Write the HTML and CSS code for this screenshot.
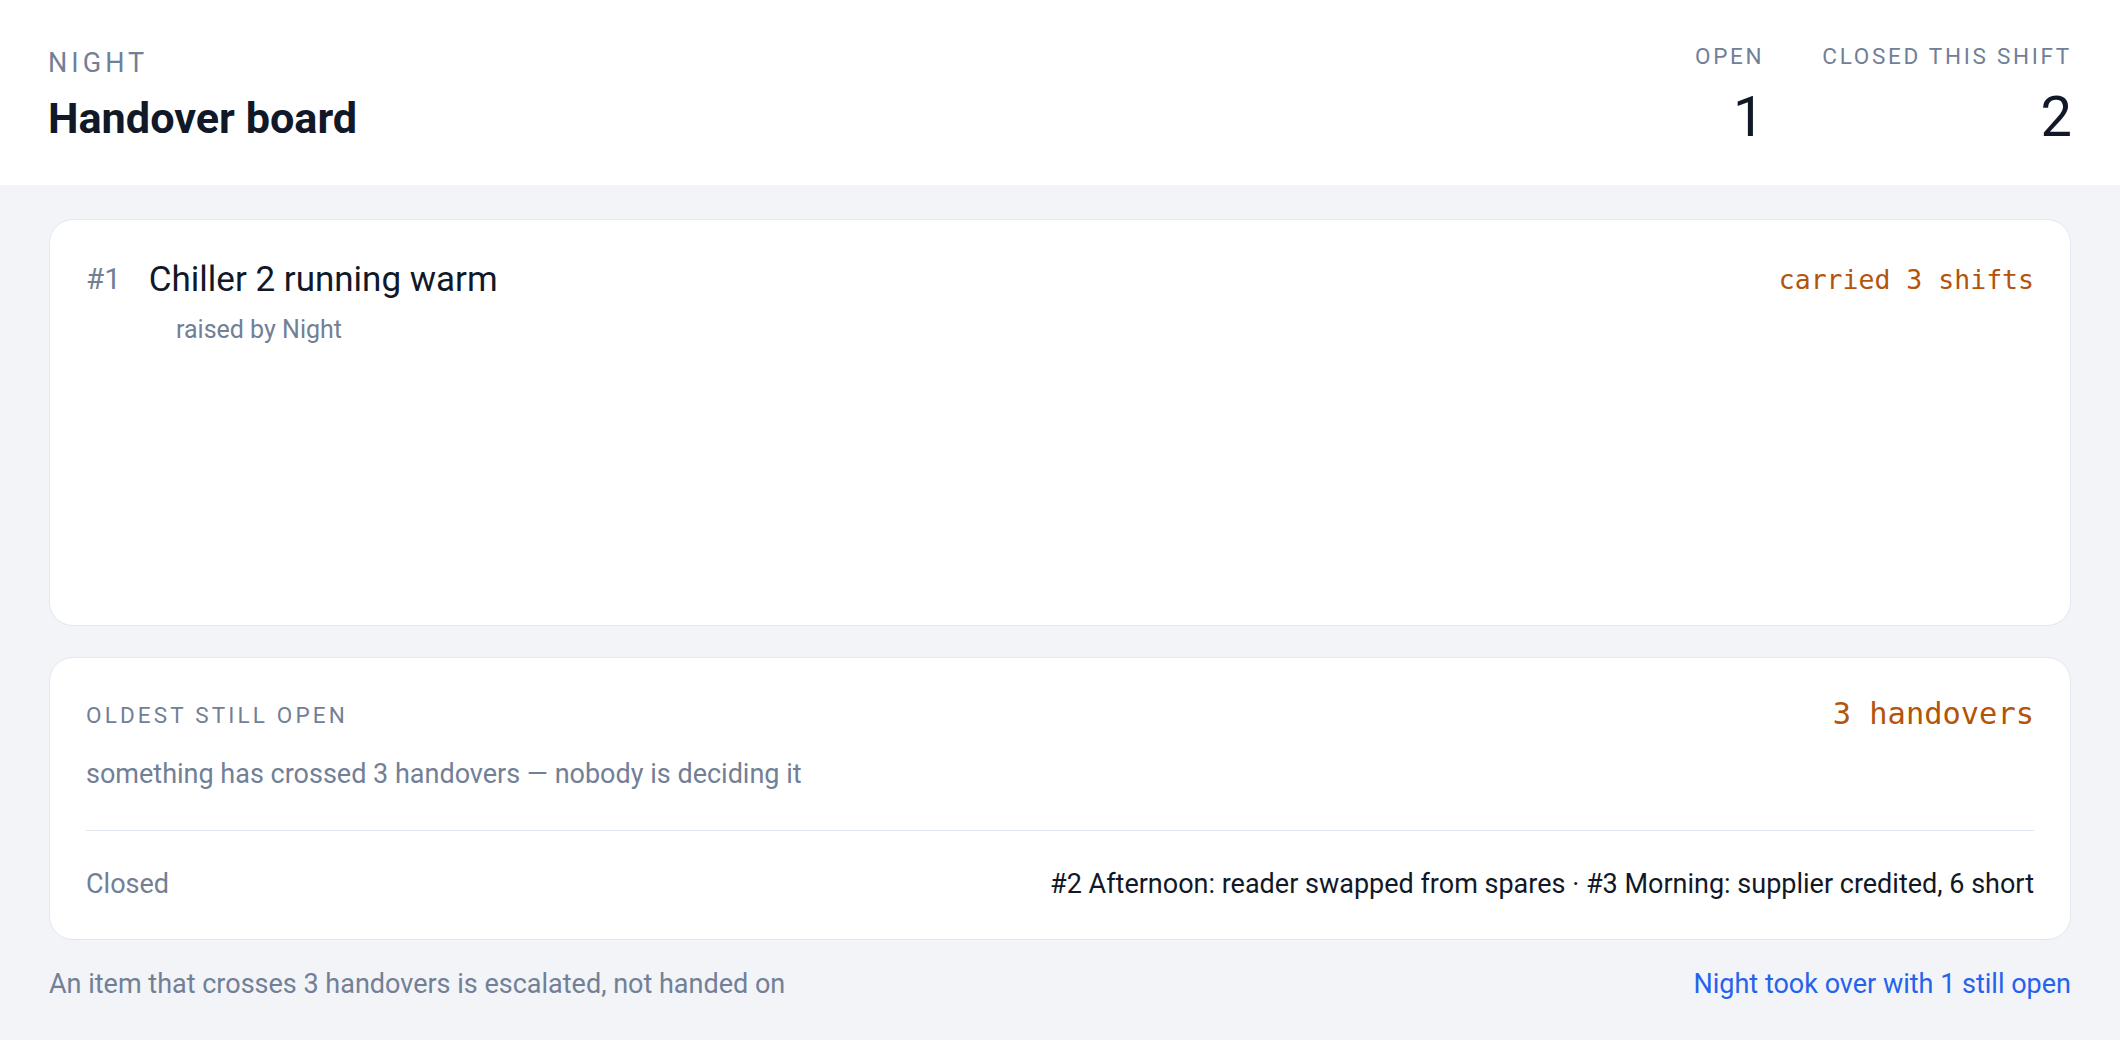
FILE: index.html
```html
<!DOCTYPE html>
<html lang="en">
<head>
<meta charset="utf-8">
<title>Handover board</title>
<link rel="stylesheet" href="styles.css">
</head>
<body>
<div class="page">
  <header class="topbar">
    <div class="title-block">
      <div class="eyebrow">Night</div>
      <h1 class="board-title">Handover board</h1>
    </div>
    <div class="stats">
      <div class="stat">
        <div class="stat-label">Open</div>
        <div class="stat-value">1</div>
      </div>
      <div class="stat">
        <div class="stat-label">Closed this shift</div>
        <div class="stat-value">2</div>
      </div>
    </div>
  </header>
  <main class="board">
    <section class="card item-card">
      <div class="item-head">
        <span class="item-num">#1</span>
        <span class="item-title">Chiller 2 running warm</span>
        <span class="tag">carried 3 shifts</span>
      </div>
      <div class="item-meta">raised by Night</div>
    </section>
    <section class="card summary-card">
      <div class="summary-head">
        <span class="summary-label">Oldest still open</span>
        <span class="tag tag-lg">3 handovers</span>
      </div>
      <div class="summary-note">something has crossed 3 handovers — nobody is deciding it</div>
      <div class="closed-row">
        <span class="closed-label">Closed</span>
        <span class="closed-list">#2 Afternoon: reader swapped from spares · #3 Morning: supplier credited, 6 short</span>
      </div>
    </section>
    <footer class="footnote">
      <span>An item that crosses 3 handovers is escalated, not handed on</span>
      <span class="footnote-link">Night took over with 1 still open</span>
    </footer>
  </main>
</div>
</body>
</html>
```
FILE: styles.css
```css
html, body {
  margin: 0;
  padding: 0;
}

body {
  font-family: Roboto, "Liberation Sans", sans-serif;
  background: #f2f4f8;
  color: #111827;
}

.page {
  height: 100vh;
  display: flex;
  flex-direction: column;
}

.topbar {
  background: #ffffff;
  display: flex;
  justify-content: space-between;
  align-items: center;
  padding: 42px 48px 36px 48px;
}

.eyebrow {
  font-size: 27px;
  line-height: 32px;
  letter-spacing: 0.15em;
  text-transform: uppercase;
  color: #718096;
}

.board-title {
  margin: 14px 0 0;
  font-size: 43.2px;
  line-height: 52px;
  font-weight: 700;
  color: #111827;
}

.stats {
  display: flex;
  gap: 58px;
}

.stat {
  text-align: right;
}

.stat-label {
  font-size: 22.5px;
  line-height: 28px;
  letter-spacing: 0.12em;
  text-transform: uppercase;
  color: #718096;
}

.stat-value {
  margin-top: 15px;
  font-size: 56px;
  line-height: 64px;
  font-weight: 400;
  color: #111827;
}

.board {
  flex: 1;
  min-height: 0;
  display: flex;
  flex-direction: column;
  padding: 34px 49px 36px;
}

.card {
  background: #ffffff;
  border: 1px solid #e2e8f0;
  border-radius: 24px;
  padding: 36px;
}

.item-card {
  flex: 1;
}

.item-head {
  display: flex;
  align-items: center;
  gap: 28px;
  height: 48px;
}

.item-num {
  font-size: 29.5px;
  line-height: 1.2;
  color: #718096;
}

.item-title {
  font-size: 35px;
  line-height: 48px;
  color: #111827;
}

.tag {
  margin-left: auto;
  font-family: "DejaVu Sans Mono", "Liberation Mono", monospace;
  font-size: 26.5px;
  line-height: 1.2;
  color: #b45309;
}

.item-meta {
  margin-top: 7px;
  padding-left: 90px;
  font-size: 25px;
  line-height: 37.5px;
  color: #718096;
}

.summary-card {
  margin-top: 31px;
  padding-bottom: 34px;
}

.summary-head {
  display: flex;
  align-items: center;
  justify-content: space-between;
  height: 42px;
}

.summary-label {
  font-size: 22.5px;
  line-height: 28px;
  letter-spacing: 0.14em;
  text-transform: uppercase;
  color: #718096;
}

.tag-lg {
  font-size: 30.4px;
}

.summary-note {
  margin-top: 18.5px;
  font-size: 27px;
  line-height: 40.5px;
  color: #718096;
}

.closed-row {
  margin-top: 35px;
  border-top: 1px solid #e2e8f0;
  padding-top: 33.5px;
  display: flex;
  justify-content: space-between;
  font-size: 27px;
  line-height: 40.5px;
}

.closed-label {
  color: #718096;
}

.closed-list {
  color: #111827;
}

.footnote {
  margin-top: 24px;
  display: flex;
  justify-content: space-between;
  font-size: 27px;
  line-height: 40.5px;
  color: #718096;
}

.footnote-link {
  color: #2563eb;
}
```
